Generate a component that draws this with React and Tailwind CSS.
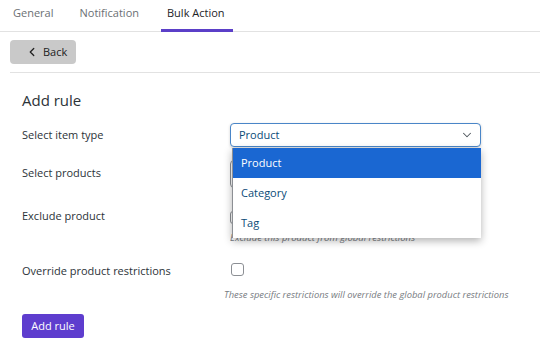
import { ChevronLeft, ChevronDown } from 'lucide-react';

const TABS = [
  { label: 'General', cls: 'pl-[13px] pr-[13px]' },
  { label: 'Notification', cls: 'pl-[13px] pr-[22px]' },
  { label: 'Bulk Action', cls: 'pl-[6px] w-[72px]', active: true },
];

const OPTIONS = ['Product', 'Category', 'Tag'];

function Checkbox() {
  return <span className="block h-[13px] w-[13px] rounded-[3px] border border-[#8c8f94] bg-white" />;
}

export default function App() {
  return (
    <div className="h-[364px] w-[540px] overflow-hidden bg-white text-[#2c3338]" style={{ fontFamily: '"Open Sans", "Liberation Sans", sans-serif' }}>
      <div className="flex h-[32px] border-b border-[#e2e2e2] text-[11px]">
        {TABS.map((t) => (
          <div
            key={t.label}
            className={`${t.cls} flex h-[32px] items-center border-b-[3px] pb-[3px] ${t.active ? 'border-[#5b3fc8] font-medium text-[#1d2327]' : 'border-transparent text-[#6b6f74]'}`}
          >
            {t.label}
          </div>
        ))}
      </div>

      <div className="pl-[10px] pt-[8px]">
        <button className="flex h-[24px] w-[66px] items-center rounded-[4px] bg-[#c9c9c9] pl-[15px] text-[11px] text-[#222]">
          <ChevronLeft size={14} strokeWidth={2.2} className="mr-[4px]" />
          Back
        </button>
        <div className="mt-[8px] border-t border-[#e2e2e2]" />
      </div>

      <div className="px-[22px]">
        <h2 className="mt-[17px] text-[15px] font-medium leading-[20px] text-[#2c3338]">Add rule</h2>

        <div className="relative mt-[13px] grid grid-cols-[208px_251px] text-[11px] font-medium">
          <div className="flex h-[24px] items-center">Select item type</div>
          <div className="flex h-[24px] items-center justify-between rounded-[4px] border border-[#4a86c8] bg-white pl-[8px] pr-[6px] text-[11px] font-normal text-[#0a4b78] shadow-[0_1px_3px_rgba(0,0,0,0.18)]">
            Product
            <ChevronDown size={14} strokeWidth={1.8} className="text-[#50575e]" />
          </div>

          <div className="mt-[14px] flex h-[24px] items-center">Select products</div>
          <div className="mt-[13px] h-[28px] rounded-[4px] border border-[#8c8f94] bg-white" />

          <div className="mt-[13px] flex h-[30px] items-center">Exclude product</div>
          <div className="mt-[13px]">
            <div className="pt-[10px]"><Checkbox /></div>
            <p className="mt-[7px] text-[9.5px] font-normal italic text-[#787c82]">Exclude this product from global restrictions</p>
          </div>

          <div className="mt-[14px] flex h-[24px] items-center">Override product restrictions</div>
          <div className="mt-[18px] pl-[1px]"><Checkbox /></div>
          <div />
          <p className="ml-[-6px] mt-[5px] whitespace-nowrap text-[9.4px] font-normal italic text-[#787c82]">These specific restrictions will override the global product restrictions</p>

          <div className="absolute left-[210px] top-[25px] w-[249px] border-l border-[#8c8f94] bg-white text-[11px] font-normal text-[#0a4b78] shadow-[0_3px_8px_rgba(0,0,0,0.3)]">
            {OPTIONS.map((o, i) => (
              <div key={o} className={`flex h-[30px] items-center pl-[8px] ${i === 0 ? 'bg-[#1a67d2] text-white' : ''}`}>{o}</div>
            ))}
          </div>
        </div>

        <button className="mt-[12px] h-[24px] w-[62px] rounded-[3px] bg-[#5e3dce] text-[11px] font-medium text-white">Add rule</button>
      </div>
    </div>
  );
}
